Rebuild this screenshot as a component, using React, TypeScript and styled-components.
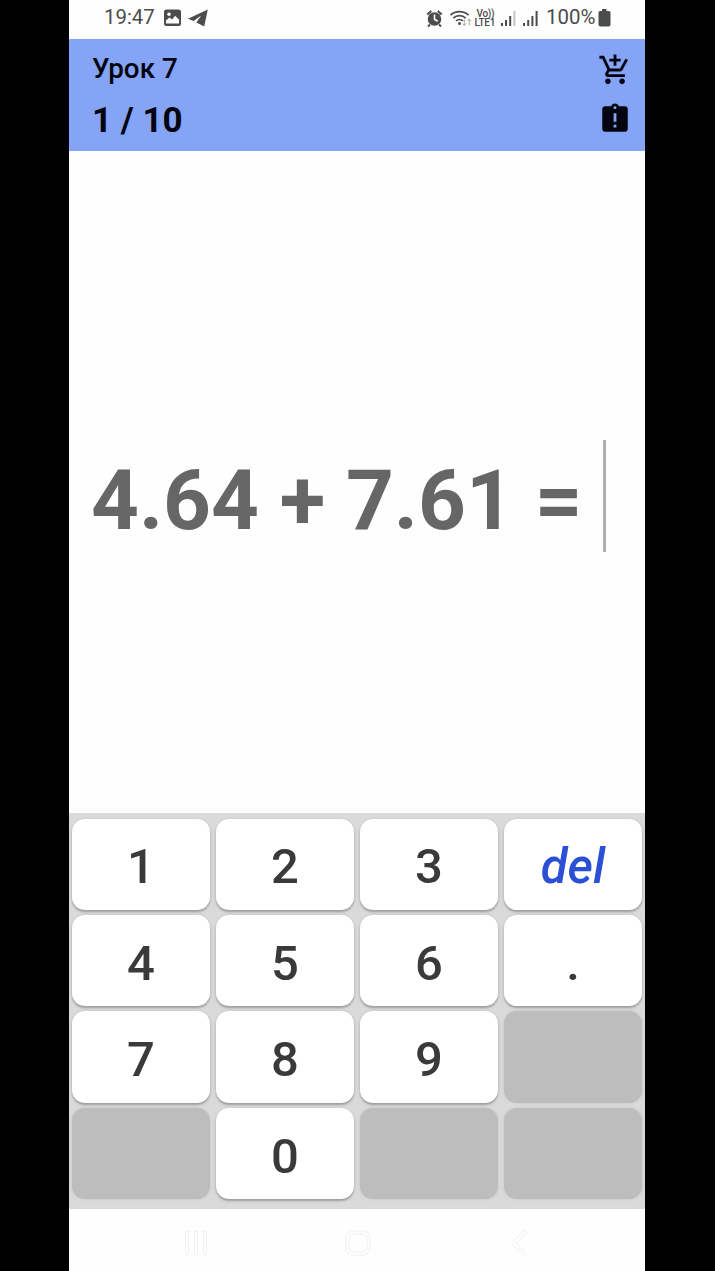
import React from "react";
import styled, { createGlobalStyle } from "styled-components";
import { MdAddShoppingCart, MdAssignmentLate } from "react-icons/md";

const GlobalStyle = createGlobalStyle`
  * { box-sizing: border-box; }
  body { margin: 0; background: #000; }
  svg { display: block; flex: none; }
`;

const Stage = styled.div`
  width: 715px;
  height: 1271px;
  display: flex;
  justify-content: center;
  padding: 0 70px 0 69px;
  background: #000;
  font-family: Roboto, "Liberation Sans", sans-serif;
`;

const Phone = styled.main`
  width: 576px;
  height: 100%;
  display: flex;
  flex-direction: column;
  background: #fefefe;
  overflow: hidden;
`;

const StatusBar = styled.div`
  height: 39px;
  flex: none;
  display: flex;
  align-items: center;
  justify-content: space-between;
  padding: 0 34px 4px 35px;
  color: #4c4c4c;
`;

const StatusGroup = styled.div`
  display: flex;
  align-items: center;
`;

const StatusText = styled.span`
  padding-bottom: 1px;
  font-size: 20.4px;
  line-height: 24px;
`;

const Clock = styled(StatusText)`
  width: 59px;
`;

const BatteryLevel = styled(StatusText)`
  width: 52px;
  margin-left: 3px;
`;

const Header = styled.header`
  height: 112px;
  flex: none;
  display: flex;
  justify-content: space-between;
  padding: 13px 13.5px 0 23px;
  background: #85a4f6;
  color: #03040f;
`;

const HeaderColumn = styled.div`
  display: flex;
  flex-direction: column;
`;

const LessonName = styled.div`
  font-size: 27.8px;
  font-weight: 500;
  line-height: 34px;
`;

const Progress = styled.div`
  margin-top: 14px;
  font-size: 35px;
  font-weight: 700;
  line-height: 42px;
`;

const HeaderActions = styled(HeaderColumn)`
  gap: 15px;
  padding-top: 1px;
`;

const Question = styled.section`
  flex: 1;
  display: flex;
  align-items: center;
  padding: 28px 0 0 22px;
`;

const Expression = styled.div`
  width: 512px;
  padding-top: 9px;
  font-size: 83.5px;
  line-height: 112px;
  font-weight: 700;
  color: #666;
  white-space: pre;
`;

const AnswerLine = styled.div`
  width: 3px;
  height: 112px;
  background: #b0b0b0;
`;

const Keypad = styled.section`
  height: 396px;
  flex: none;
  display: grid;
  grid-template-columns: repeat(4, 138px);
  grid-template-rows: repeat(4, 91.3px);
  gap: 5.2px 6px;
  padding: 5.5px 3px 0;
  background: #dadada;
`;

const Key = styled.button<{ $accent?: boolean }>`
  border: 0;
  border-radius: 13px;
  padding: 6px 0 0;
  background: #fff;
  box-shadow: 0 2px 2px rgba(0, 0, 0, 0.22), 0 1px 4px rgba(0, 0, 0, 0.1);
  font-family: inherit;
  font-size: 49px;
  font-weight: 500;
  line-height: 60px;
  font-style: ${(p) => (p.$accent ? "italic" : "normal")};
  color: ${(p) => (p.$accent ? "#2b50d6" : "#3a3a3a")};
`;

const BlankKey = styled.div`
  border-radius: 13px;
  background: #bdbdbd;
  box-shadow: 0 0 3px #c4c4c4;
`;

const NavBar = styled.nav`
  height: 62px;
  flex: none;
  display: flex;
  align-items: center;
  padding: 5px 117px 0 115px;
  justify-content: space-between;
  color: #f0f0f0;
`;

const HomeSlot = styled.div`
  margin-right: 4px;
`;

const keys = ["1", "2", "3", "del", "4", "5", "6", ".", "7", "8", "9", "", "", "0", "", ""];

const NotificationIcons = () => (
  <svg width="46" height="20" viewBox="163 8 46 20" fill="#4c4c4c">
    <rect x="164" y="9.500" width="17" height="16.500" rx="2.500" />
    <circle cx="169" cy="14.200" r="1.800" fill="#fefefe" />
    <path d="M166 23.500v-3l3.500-3 2.600 2 3-3.800 4 4v3.800z" fill="#fefefe" />
    <path d="M207.800 9.500 188 18.800l5.600 2.200 7.600-5.400-4.800 7 7.800 3.800z" />
  </svg>
);

const StatusIcons = () => (
  <svg width="118" height="24" viewBox="425 5 118 24" fill="none" stroke="#4c4c4c">
    <circle cx="434.5" cy="18" r="6.8" fill="#4c4c4c" stroke="none" />
    <path d="M427.300 13.500l4-3.600M441.700 13.500l-4-3.600M430 23.500l-2 2M439 23.500l2 2" strokeWidth="2" />
    <path d="M434.500 13.500v4.800l3.200 2" stroke="#fefefe" strokeWidth="1.600" />
    <path d="M450.500 14.200a13.200 13.200 0 0 1 18 0M453.300 17.200a9 9 0 0 1 12.400 0M456 20a5 5 0 0 1 7 0" strokeWidth="1.700" />
    <circle cx="459.500" cy="22.600" r="1.500" fill="#4c4c4c" stroke="none" />
    <path d="M464.300 18v6.500m-2-2 2 2 2-2M469.300 24.500V18m-2 2 2-2 2 2" stroke="#aaa" />
    <g fill="#4c4c4c" stroke="none" fontFamily="Roboto, sans-serif" fontWeight="500">
      <text x="476.5" y="16" fontSize="10" textLength="18">Vo))</text>
      <text x="474.5" y="25" fontSize="10" textLength="21">LTE1</text>
    </g>
    <path d="M502 22v3M506 19v6M510.200 15v10" strokeWidth="2" />
    <path d="M514.400 10v15" stroke="#c4c4c4" strokeWidth="2" />
    <path d="M524 22v3M528.200 19v6M532.400 15v10M536.600 10v15" strokeWidth="2" />
  </svg>
);

const BatteryIcon = () => (
  <svg width="13" height="18" viewBox="0 0 13 18" fill="#4c4c4c">
    <path d="M4 0h4.500v2H11q1.500 0 1.500 1.500v12Q12.500 17.500 10.500 17.500h-8Q.5 17.500.5 15.500v-12Q.5 2 2 2h2z" />
  </svg>
);

const RecentsIcon = () => (
  <svg width="25" height="26" viewBox="0 0 25 26" fill="none" stroke="currentColor" strokeWidth="1">
    <rect x="1.500" y="1" width="3" height="24" rx="1.500" />
    <rect x="10.500" y="1" width="3" height="24" rx="1.500" />
    <rect x="19.500" y="1" width="3" height="24" rx="1.500" />
  </svg>
);

const HomeIcon = () => (
  <svg width="26" height="26" viewBox="0 0 26 26" fill="none" stroke="currentColor" strokeWidth="1">
    <rect x="1" y="1" width="24" height="24" rx="7" />
    <rect x="4" y="4" width="18" height="18" rx="5" />
  </svg>
);

const BackIcon = () => (
  <svg width="18" height="28" viewBox="0 0 18 28" fill="none" stroke="currentColor" strokeWidth="1">
    <path d="M14.500 1.500 1.500 14l13 12.500 2-2.500L6 14 16.500 4z" />
  </svg>
);

export default function App() {
  return (
    <Stage>
      <GlobalStyle />
      <Phone>
        <StatusBar>
          <StatusGroup>
            <Clock>19:47</Clock>
            <NotificationIcons />
          </StatusGroup>
          <StatusGroup>
            <StatusIcons />
            <BatteryLevel>100%</BatteryLevel>
            <BatteryIcon />
          </StatusGroup>
        </StatusBar>
        <Header>
          <HeaderColumn>
            <LessonName>Урок 7</LessonName>
            <Progress>1 / 10</Progress>
          </HeaderColumn>
          <HeaderActions>
            <MdAddShoppingCart size={34} />
            <MdAssignmentLate size={34} />
          </HeaderActions>
        </Header>
        <Question>
          <Expression>4.64 + 7.61 =</Expression>
          <AnswerLine />
        </Question>
        <Keypad>
          {keys.map((label, i) =>
            label ? (
              <Key key={i} $accent={label === "del"}>
                {label}
              </Key>
            ) : (
              <BlankKey key={i} />
            )
          )}
        </Keypad>
        <NavBar>
          <RecentsIcon />
          <HomeSlot>
            <HomeIcon />
          </HomeSlot>
          <BackIcon />
        </NavBar>
      </Phone>
    </Stage>
  );
}
